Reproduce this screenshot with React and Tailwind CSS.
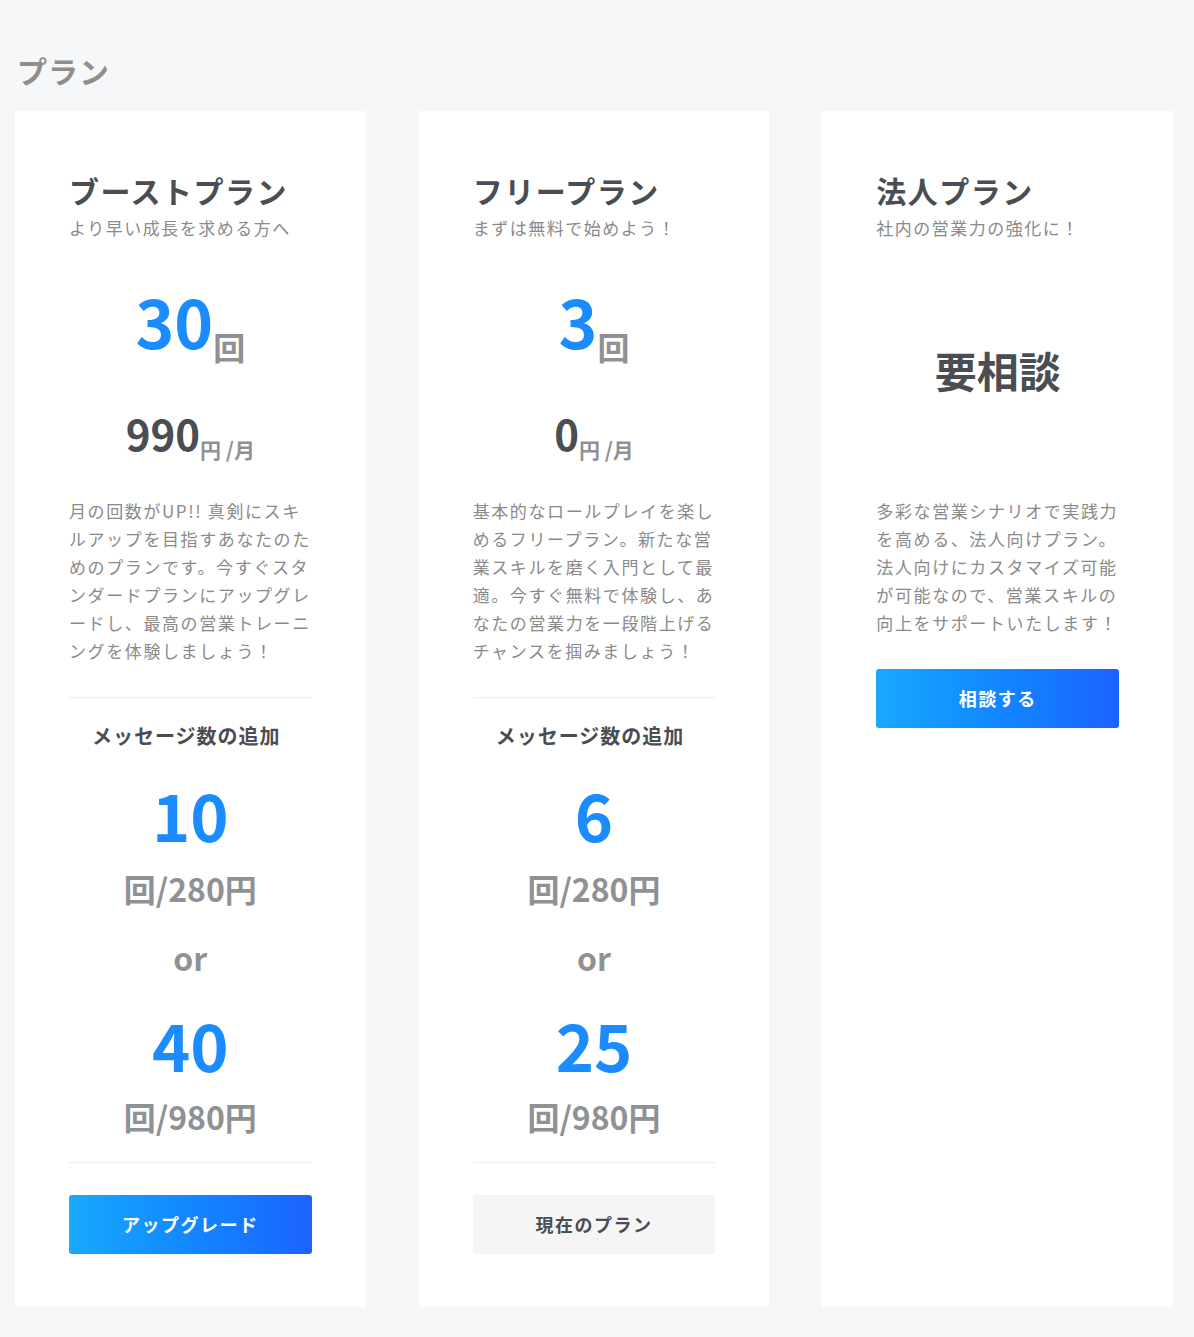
const FONT = "font-['Noto_Sans_CJK_JP','Noto_Sans',sans-serif]";

const plans = [
  {
    name: 'ブーストプラン',
    lead: 'より早い成長を求める方へ',
    count: '30',
    price: '990',
    desc: [
      '月の回数がUP!! 真剣にスキ',
      'ルアップを目指すあなたのた',
      'めのプランです。今すぐスタ',
      'ンダードプランにアップグレ',
      'ードし、最高の営業トレーニ',
      'ングを体験しましょう！',
    ],
    extra: ['10', '40'],
    button: 'アップグレード',
    primary: true,
  },
  {
    name: 'フリープラン',
    lead: 'まずは無料で始めよう！',
    count: '3',
    price: '0',
    desc: [
      '基本的なロールプレイを楽し',
      'めるフリープラン。新たな営',
      '業スキルを磨く入門として最',
      '適。今すぐ無料で体験し、あ',
      'なたの営業力を一段階上げる',
      'チャンスを掴みましょう！',
    ],
    extra: ['6', '25'],
    button: '現在のプラン',
    primary: false,
  },
];

function Description({ lines }) {
  return (
    <div className="text-[17px] leading-[28px] tracking-[1.6px] text-[#8a8a8a] whitespace-nowrap">
      {lines.map((l) => (
        <div key={l}>{l}</div>
      ))}
    </div>
  );
}

function CardHead({ name, lead }) {
  return (
    <>
      <h2 className="text-[30px] leading-[40px] font-bold tracking-[1.5px] text-[#4a4e53]">{name}</h2>
      <p className="mt-[6px] text-[17px] leading-[24px] tracking-[1.5px] text-[#8a8a8a]">{lead}</p>
    </>
  );
}

function PlanCard({ plan }) {
  return (
    <div className="bg-white px-[54px] pt-[59px] pb-[53px] flex flex-col">
      <CardHead name={plan.name} lead={plan.lead} />

      <div className="mt-[47px] h-[66px] text-center leading-none">
        <span className="text-[66px] font-bold text-[#1a8cff]">{plan.count}</span>
        <span className="relative top-[11px] text-[32px] font-bold text-[#8f9195]">回</span>
      </div>

      <div className="mt-[59px] h-[42px] text-center leading-none">
        <span className="text-[42px] font-bold text-[#4a4e53]">{plan.price}</span>
        <span className="relative top-[7px] text-[21px] font-bold text-[#8f9195]">円 /月</span>
      </div>

      <div className="mt-[43px]">
        <Description lines={plan.desc} />
      </div>

      <div className="mt-[32px] h-px bg-[#ededed]" />

      <p className="mt-[24px] pr-[8px] text-center text-[20px] leading-[28px] font-bold tracking-[1px] text-[#4a4e53]">
        メッセージ数の追加
      </p>

      <div className="mt-[32px] h-[65px] text-center text-[65px] leading-none font-bold text-[#1a8cff]">{plan.extra[0]}</div>
      <div className="mt-[21px] text-center text-[32px] leading-[40px] font-bold text-[#8f9195]">回/280円</div>
      <div className="mt-[29px] text-center text-[32px] leading-[40px] font-bold text-[#8f9195]">or</div>
      <div className="mt-[35px] h-[65px] text-center text-[65px] leading-none font-bold text-[#1a8cff]">{plan.extra[1]}</div>
      <div className="mt-[19px] text-center text-[32px] leading-[40px] font-bold text-[#8f9195]">回/980円</div>

      <div className="mt-[26px] h-px bg-[#ededed]" />

      {plan.primary ? (
        <button className="mt-[32px] h-[59px] rounded-[3px] bg-gradient-to-r from-[#1aa8ff] to-[#1c62ff] text-white text-[18px] font-bold tracking-[1.5px]">
          {plan.button}
        </button>
      ) : (
        <button className="mt-[32px] h-[59px] bg-[#f5f5f5] text-[#4a4e53] text-[18px] font-bold tracking-[1.5px]">
          {plan.button}
        </button>
      )}
    </div>
  );
}

function CorporateCard() {
  return (
    <div className="bg-white px-[54px] pt-[59px] pb-[53px] flex flex-col">
      <CardHead name="法人プラン" lead="社内の営業力の強化に！" />
      <div className="mt-[109px] text-center text-[42px] leading-none font-bold text-[#4a4e53]">要相談</div>
      <div className="mt-[106px]">
        <Description
          lines={[
            '多彩な営業シナリオで実践力',
            'を高める、法人向けプラン。',
            '法人向けにカスタマイズ可能',
            'が可能なので、営業スキルの',
            '向上をサポートいたします！',
          ]}
        />
      </div>
      <button className="mt-[32px] h-[59px] rounded-[3px] bg-gradient-to-r from-[#1aa8ff] to-[#1c62ff] text-white text-[18px] font-bold tracking-[1.5px]">
        相談する
      </button>
    </div>
  );
}

export default function App() {
  return (
    <div className={`${FONT} min-h-[1337px] bg-[#f6f7f9] pl-[15px] pr-[21px] pt-[50px]`}>
      <h1 className="pl-[2px] text-[30px] leading-[40px] font-bold tracking-[1px] text-[#8e8e8e]">プラン</h1>
      <div className="mt-[21px] grid grid-cols-3 gap-[53px]">
        {plans.map((p) => (
          <PlanCard key={p.name} plan={p} />
        ))}
        <CorporateCard />
      </div>
    </div>
  );
}
